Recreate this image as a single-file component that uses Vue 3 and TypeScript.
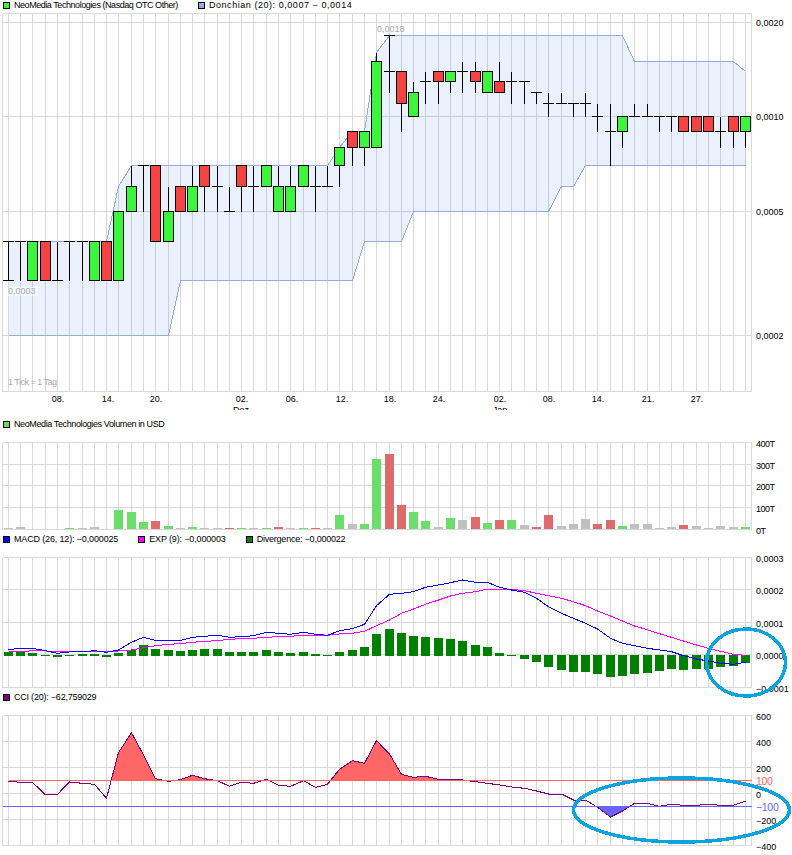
<script setup lang="ts">
// candle: kind, body top, body bottom (or 2nd tick), high, low. Values are price in 0,0001 steps
type Candle = [string, number, number, number, number]

const levelY: Record<number, number> = {
  2: 335.5, 3: 280.5, 4: 241.5, 5: 211.5, 6: 186.5, 7: 165.5, 8: 147.5, 9: 131.5,
  10: 116.5, 11: 103.5, 12: 92.5, 13: 81.5, 14: 71.5, 15: 61.5, 16: 52.5, 18: 35.5,
}

const gridX = Array.from({ length: 61 }, (_, i) => Math.floor(8.33 + 12.283 * i) + 0.5)

const candles: Candle[] = [
  ['t', 4, 3, 4, 3], ['t', 4, 4, 4, 3], ['g', 4, 3, 4, 3], ['r', 4, 3, 4, 3], ['t', 3, 3, 4, 3],
  ['t', 4, 4, 4, 3], ['t', 4, 4, 4, 3], ['g', 4, 3, 4, 3], ['r', 4, 3, 4, 3], ['g', 5, 3, 5, 3],
  ['g', 6, 5, 7, 5], ['t', 7, 7, 7, 5], ['r', 7, 4, 7, 4], ['g', 5, 4, 6, 4], ['r', 6, 5, 6, 5],
  ['g', 6, 5, 7, 5], ['r', 7, 6, 7, 5], ['t', 6, 6, 7, 5], ['t', 5, 5, 6, 5], ['r', 7, 6, 7, 5],
  ['t', 6, 6, 7, 5], ['g', 7, 6, 7, 6], ['g', 6, 5, 7, 5], ['g', 6, 5, 7, 5], ['g', 7, 6, 7, 6],
  ['t', 6, 6, 7, 5], ['t', 6, 6, 7, 6], ['g', 8, 7, 8, 6], ['r', 9, 8, 9, 7], ['g', 9, 8, 9, 7],
  ['g', 15, 8, 16, 8], ['t', 18, 14, 18, 12], ['r', 14, 11, 14, 9], ['g', 12, 10, 13, 10], ['t', 13, 13, 14, 11],
  ['r', 14, 13, 14, 11], ['g', 14, 13, 14, 12], ['t', 14, 14, 15, 12], ['r', 14, 13, 15, 12], ['g', 14, 12, 14, 12],
  ['r', 13, 12, 15, 12], ['t', 13, 13, 14, 11], ['t', 13, 13, 13, 11], ['t', 12, 12, 12, 11], ['t', 11, 11, 12, 10],
  ['t', 11, 11, 12, 11], ['t', 11, 11, 11, 10], ['t', 11, 11, 12, 10], ['t', 10, 10, 11, 9], ['t', 9, 9, 11, 7],
  ['g', 10, 9, 10, 8], ['t', 10, 10, 11, 10], ['t', 10, 10, 11, 10], ['t', 10, 10, 10, 9], ['t', 10, 10, 10, 9],
  ['r', 10, 9, 10, 9], ['r', 10, 9, 10, 9], ['r', 10, 9, 10, 9], ['t', 9, 9, 10, 8], ['r', 10, 9, 10, 8],
  ['g', 10, 9, 10, 8],
]

// donchian band, index -> level, held flat between entries
const upperKeys: [number, number][] = [[0, 4], [8, 4], [9, 6], [10, 7], [26, 7], [27, 8], [28, 9], [29, 9], [30, 16], [31, 18], [50, 18], [51, 15], [59, 15], [60, 14]]
const lowerKeys: [number, number][] = [[0, 2], [13, 2], [14, 3], [28, 3], [29, 4], [32, 4], [33, 5], [44, 5], [45, 6], [46, 6], [47, 7], [60, 7]]
const toPts = (keys: [number, number][]) => keys.map(([i, l]) => `${gridX[i]},${levelY[l]}`).join(' ')
const upperLine = toPts(upperKeys)
const lowerLine = toPts(lowerKeys)
const bandArea = `${upperLine} ${toPts([...lowerKeys].reverse())}`

const dateLabels = [
  ['08.', 58], ['14.', 108], ['20.', 156], ['02.', 242], ['06.', 292], ['12.', 342], ['18.', 390],
  ['24.', 439], ['02.', 500], ['08.', 549], ['14.', 598], ['21.', 648], ['27.', 697],
] as [string, number][]

const priceHLines = [13.5, 22.5, 116.5, 211.5, 335.5, 391.5]
const priceLabels = [['0,0020', 22.5], ['0,0010', 116.5], ['0,0005', 211.5], ['0,0002', 335.5]] as [string, number][]

// volume, bar height in px and colour
const volumes: [number, string][] = [
  [1, 'n'], [2, 'n'], [0, 'n'], [0, 'n'], [0, 'n'], [1, 'g'], [1, 'n'], [2, 'n'], [0, 'n'], [19, 'g'],
  [17, 'g'], [7, 'g'], [8, 'r'], [3, 'g'], [1, 'n'], [2, 'g'], [1, 'n'], [1, 'n'], [1, 'r'], [1, 'g'],
  [1, 'n'], [1, 'g'], [2, 'r'], [1, 'n'], [1, 'g'], [1, 'r'], [1, 'n'], [14, 'g'], [5, 'n'], [5, 'g'],
  [70, 'g'], [75, 'r'], [24, 'r'], [17, 'g'], [8, 'g'], [2, 'n'], [11, 'g'], [9, 'n'], [12, 'r'], [6, 'g'],
  [9, 'r'], [9, 'g'], [4, 'n'], [2, 'r'], [14, 'r'], [3, 'n'], [5, 'n'], [10, 'n'], [5, 'r'], [9, 'r'],
  [3, 'g'], [5, 'n'], [5, 'n'], [1, 'n'], [2, 'n'], [4, 'r'], [3, 'n'], [1, 'n'], [3, 'n'], [2, 'n'],
  [2, 'g'],
]
const volumeHLines = [442.5, 464.5, 485.5, 507.5, 529.5]
const volumeLabels = [['400T', 443], ['300T', 465], ['200T', 486], ['100T', 508], ['0T', 530]] as [string, number][]

// macd values are measured from the chart, in y offsets (thirds of a px) below page y 535
const macd = [
  344, 340, 340, 347, 355, 351, 350, 347, 352, 345, 322, 307, 316, 316, 316, 307, 304, 301, 307, 305,
  302, 292, 295, 298, 292, 298, 301, 287, 281, 268, 212, 178, 175, 170, 157, 150, 143, 135, 142, 142,
  157, 165, 172, 190, 215, 235, 250, 265, 282, 310, 325, 332, 340, 345, 350, 362, 372, 378, 385, 388, 382,
]
const exp = [
  350, 350, 347, 348, 350, 350, 350, 350, 350, 348, 345, 338, 332, 328, 326, 322, 319, 317, 313, 311,
  310, 307, 305, 304, 301, 301, 301, 297, 295, 289, 272, 255, 235, 222, 208, 195, 183, 175, 170, 162,
  162, 163, 167, 175, 182, 190, 200, 212, 228, 243, 258, 273, 284, 296, 307, 318, 330, 340, 349, 358, 361,
]
// negative means the bar hangs below the zero line
const divergence = [
  351, 351, 354, -362, -366, -362, 357, 357, -366, 354, 345, 330, 342, 345, 348, 345, 342, 342, 351, 351,
  351, 345, 351, 354, 351, 357, -362, 351, 345, 336, 297, 282, 294, 303, 306, 309, 312, 318, 330, 336,
  354, -362, -372, -381, -396, -405, -411, -411, -417, -426, -423, -417, -414, -408, -402, -405, -402, -402, -396, -393, -384,
]
const macdY = (z: number) => 535 + z / 3
const line = (vals: number[], toY: (z: number) => number) => vals.map((z, i) => `${gridX[i]},${toY(z).toFixed(1)}`).join(' ')
const macdLine = line(macd, macdY)
const expLine = line(exp, macdY)
const divBars = divergence.map((z, i) => {
  const top = z > 0 ? Math.round(macdY(z)) : 655
  const bottom = z > 0 ? 656 : Math.round(macdY(-z))
  return { x: gridX[i] - 4.5, y: top, h: bottom - top }
})
const macdHLines = [557.5, 589.5, 622.5, 654.5, 687.5]
const macdLabels = [['0,0003', 558], ['0,0002', 590], ['0,0001', 623], ['0,0000', 655], ['−0,0001', 688]] as [string, number][]

const cci = [
  289, 292, 292, 330, 328, 291, 295, 298, 340, 203, 143, 210, 281, 289, 284, 271, 281, 287, 304, 292,
  295, 283, 301, 304, 287, 307, 298, 253, 227, 235, 167, 207, 268, 277, 274, 283, 283, 285, 290, 295,
  300, 306, 310, 318, 327, 327, 345, 345, 367, 396, 378, 355, 355, 364, 358, 361, 361, 358, 361, 361, 349,
]
const cciY = (z: number) => 685 + z / 3
const cciLine = line(cci, cciY)
const cciRedArea = `${gridX[0]},780.5 ${cciLine} ${gridX[60]},780.5`
const cciBlueArea = `${gridX[0]},806.5 ${cciLine} ${gridX[60]},806.5`
const cciHLines = [715.5, 741.5, 767.5, 793.5, 819.5, 845.5]
const cciLabels = [['600', 716], ['400', 742], ['200', 768], ['0', 794], ['−200', 820], ['−400', 846]] as [string, number][]

const bodyClass: Record<string, string> = { g: 'body-green', r: 'body-red' }
const volClass: Record<string, string> = { g: 'vol-green', r: 'vol-red', n: 'vol-gray' }
</script>

<template>
  <div class="page">
    <div class="legend first">
      <span class="item tight-xl"><i class="box" style="background: #3ef53e"></i>NeoMedia Technologies (Nasdaq OTC Other)</span>
      <span class="item wide"><i class="box" style="background: #94aedb"></i>Donchian (20): 0,0007 − 0,0014</span>
    </div>

    <svg class="chart price" width="792" height="397" viewBox="0 13 792 397">
      <g class="grid">
        <line v-for="x in gridX" :key="x" :x1="x" :x2="x" y1="13.5" y2="391.5" />
        <line v-for="y in priceHLines" :key="y" x1="2.5" x2="751.5" :y1="y" :y2="y" />
        <line x1="2.5" x2="2.5" y1="13.5" y2="391.5" />
        <line x1="751.5" x2="751.5" y1="13.5" y2="391.5" />
      </g>
      <polygon class="band" :points="bandArea" />
      <polyline class="band-line" :points="upperLine" />
      <polyline class="band-line" :points="lowerLine" />

      <g v-for="(c, i) in candles" :key="i" class="candle">
        <line :x1="gridX[i]" :x2="gridX[i]" :y1="levelY[c[3]]" :y2="levelY[c[4]]" />
        <template v-if="c[0] === 't'">
          <line :x1="gridX[i] - 5.5" :x2="gridX[i] + 5.5" :y1="levelY[c[1]]" :y2="levelY[c[1]]" />
          <line v-if="c[2] !== c[1]" :x1="gridX[i] - 5.5" :x2="gridX[i] + 5.5" :y1="levelY[c[2]]" :y2="levelY[c[2]]" />
        </template>
        <rect v-else :class="bodyClass[c[0]]" :x="gridX[i] - 5" :y="levelY[c[1]]" width="10" :height="levelY[c[2]] - levelY[c[1]]" />
      </g>

      <text class="note" x="377" y="32">0,0018</text>
      <rect class="note-bg" x="7" y="287" width="31" height="9" />
      <text class="note" x="8" y="294">0,0003</text>
      <text class="note tick-note" x="8" y="385">1 Tick = 1 Tag</text>

      <text v-for="[t, y] in priceLabels" :key="t" class="label" x="756" :y="y + 3.5">{{ t }}</text>
      <text v-for="[t, x] in dateLabels" :key="t + x" class="label" :x="x" y="402" text-anchor="middle">{{ t }}</text>
      <text class="label" x="241" y="412.5" text-anchor="middle">Dez</text>
      <text class="label" x="500" y="412.5" text-anchor="middle">Jan</text>
    </svg>

    <div class="legend gap-top">
      <span class="item tight-l"><i class="box" style="background: #66dd66"></i>NeoMedia Technologies Volumen in USD</span>
    </div>

    <svg class="chart volume" width="792" height="97" viewBox="0 437 792 97">
      <g class="grid">
        <line v-for="x in gridX" :key="x" :x1="x" :x2="x" y1="442.5" y2="529.5" />
        <line v-for="y in volumeHLines" :key="y" x1="2.5" x2="751.5" :y1="y" :y2="y" />
        <line x1="2.5" x2="2.5" y1="442.5" y2="529.5" />
        <line x1="751.5" x2="751.5" y1="442.5" y2="529.5" />
      </g>
      <rect
        v-for="(v, i) in volumes"
        :key="i"
        :class="volClass[v[1]]"
        class="bar"
        :x="gridX[i] - 4.5"
        :y="529 - v[0]"
        width="9"
        :height="v[0]"
      />
      <text v-for="[t, y] in volumeLabels" :key="t" class="label" x="756" :y="y + 3.5">{{ t }}</text>
    </svg>

    <div class="legend">
      <span class="item tight-s"><i class="box" style="background: #0000ff"></i>MACD (26, 12): −0,000025</span>
      <span class="item tight-s"><i class="box" style="background: #ff00ff"></i>EXP (9): −0,000003</span>
      <span class="item tight-m"><i class="box" style="background: #008000"></i>Divergence: −0,000022</span>
    </div>

    <svg class="chart macd" width="792" height="148" viewBox="0 552 792 148">
      <g class="grid">
        <line v-for="x in gridX" :key="x" :x1="x" :x2="x" y1="557.5" y2="687.5" />
        <line v-for="y in macdHLines" :key="y" x1="2.5" x2="751.5" :y1="y" :y2="y" />
        <line x1="2.5" x2="2.5" y1="557.5" y2="687.5" />
        <line x1="751.5" x2="751.5" y1="557.5" y2="687.5" />
      </g>
      <rect v-for="(b, i) in divBars" :key="i" class="div-bar" :x="b.x" :y="b.y" width="9" :height="b.h" />
      <polyline class="exp-line" :points="expLine" />
      <polyline class="macd-line" :points="macdLine" />
      <text v-for="[t, y] in macdLabels" :key="t" class="label" x="756" :y="y + 3.5">{{ t }}</text>
    </svg>

    <div class="legend cci-legend">
      <span class="item tight-m"><i class="box" style="background: #800080"></i>CCI (20): −62,759029</span>
    </div>

    <svg class="chart cci" width="792" height="145" viewBox="0 710 792 145">
      <defs>
        <clipPath id="above"><rect x="0" y="710" width="792" height="70.5" /></clipPath>
        <clipPath id="below"><rect x="0" y="806.5" width="792" height="48" /></clipPath>
      </defs>
      <g class="grid">
        <line v-for="x in gridX" :key="x" :x1="x" :x2="x" y1="715.5" y2="845.5" />
        <line v-for="y in cciHLines" :key="y" x1="2.5" x2="751.5" :y1="y" :y2="y" />
        <line x1="2.5" x2="2.5" y1="715.5" y2="845.5" />
        <line x1="751.5" x2="751.5" y1="715.5" y2="845.5" />
      </g>
      <polygon class="cci-red" :points="cciRedArea" clip-path="url(#above)" />
      <polygon class="cci-blue" :points="cciBlueArea" clip-path="url(#below)" />
      <polyline class="cci-line" :points="cciLine" />
      <line class="level-red" x1="8.5" x2="751.5" y1="780.5" y2="780.5" />
      <line class="level-blue" x1="2.5" x2="751.5" y1="806.5" y2="806.5" />
      <text v-for="[t, y] in cciLabels" :key="t" class="label" x="756" :y="y + 3.5">{{ t }}</text>
      <text class="label-big red" x="756" y="785">100</text>
      <text class="label-big blue" x="756" y="811">−100</text>
    </svg>

    <!-- hand drawn marks on top of the finished chart -->
    <svg class="marks" width="792" height="855" viewBox="0 0 792 855">
      <ellipse cx="746" cy="662.5" rx="39.5" ry="33.5" />
      <ellipse cx="681.5" cy="810" rx="108" ry="32" />
    </svg>
  </div>
</template>

<style>
body {
  background: #ffffff;
}
</style>

<style scoped>
.page {
  position: relative;
  width: 792px;
  height: 855px;
  overflow: hidden;
  display: flex;
  flex-direction: column;
  background: #ffffff;
  font-family: "Liberation Sans", Arial, sans-serif;
}

.legend {
  display: flex;
  gap: 20px;
  height: 10px;
  padding-left: 3px;
  font-size: 9px;
  line-height: 10px;
  color: #000000;
  white-space: nowrap;
}

.legend.first {
  margin-bottom: 3px;
}

.legend.gap-top {
  margin-top: 9px;
  margin-bottom: 8px;
}

.legend.cci-legend {
  margin-top: -8px;
}

.item {
  display: flex;
  align-items: center;
  gap: 4px;
}

/* the original legend font is a bitmap one, spacing evens out the widths */
.tight-xl {
  letter-spacing: -0.45px;
}

.tight-l {
  letter-spacing: -0.39px;
}

.tight-m {
  letter-spacing: -0.22px;
}

.tight-s {
  letter-spacing: -0.15px;
}

.wide {
  letter-spacing: 0.55px;
}

.box {
  display: block;
  width: 7px;
  height: 7px;
  box-sizing: border-box;
  border: 1px solid #000000;
}

.chart {
  display: block;
  flex: none;
}

.macd {
  margin-top: 8px;
}

.cci {
  margin-top: 8px;
}

.grid line {
  stroke: #d9d9d9;
  stroke-width: 1;
  shape-rendering: crispEdges;
}

.band {
  fill: #3c78e6;
  fill-opacity: 0.1;
  shape-rendering: crispEdges;
}

.band-line {
  fill: none;
  stroke: #94aedb;
  stroke-width: 1;
  shape-rendering: crispEdges;
}

.candle line {
  stroke: #000000;
  stroke-width: 1;
  shape-rendering: crispEdges;
}

.candle rect {
  stroke: #000000;
  stroke-width: 1;
  shape-rendering: crispEdges;
}

.body-green {
  fill: #3ef53e;
}

.body-red {
  fill: #f54242;
}

.bar {
  shape-rendering: crispEdges;
}

.vol-green {
  fill: #6bdd6b;
}

.vol-red {
  fill: #dd6b6b;
}

.vol-gray {
  fill: #c0c0c0;
}

.div-bar {
  fill: #008000;
  shape-rendering: crispEdges;
}

.macd-line,
.exp-line,
.cci-line {
  fill: none;
  stroke-width: 1;
  shape-rendering: crispEdges;
}

.macd-line {
  stroke: #0000ff;
}

.exp-line {
  stroke: #ff00ff;
}

.cci-line {
  stroke: #800080;
}

.cci-red {
  fill: #ff6666;
  shape-rendering: crispEdges;
}

.cci-blue {
  fill: #6666ff;
  shape-rendering: crispEdges;
}

.level-red {
  stroke: #ff6666;
  shape-rendering: crispEdges;
}

.level-blue {
  stroke: #6666ff;
  shape-rendering: crispEdges;
}

.label {
  font-size: 9px;
  fill: #000000;
}

.volume .label {
  letter-spacing: -0.5px;
}

.label-big {
  font-size: 10.5px;
  letter-spacing: -0.3px;
}

.label-big.red {
  fill: #ff6666;
}

.label-big.blue {
  fill: #6666ff;
}

.note {
  font-size: 9px;
  fill: #aaaaaa;
}

.tick-note {
  letter-spacing: -0.5px;
}

.note-bg {
  fill: #ffffff;
  fill-opacity: 0.5;
}

.marks {
  position: absolute;
  left: 0;
  top: 0;
  pointer-events: none;
}

.marks ellipse {
  fill: none;
  stroke: #0ca4e0;
  stroke-width: 3.5;
  shape-rendering: crispEdges;
}
</style>
